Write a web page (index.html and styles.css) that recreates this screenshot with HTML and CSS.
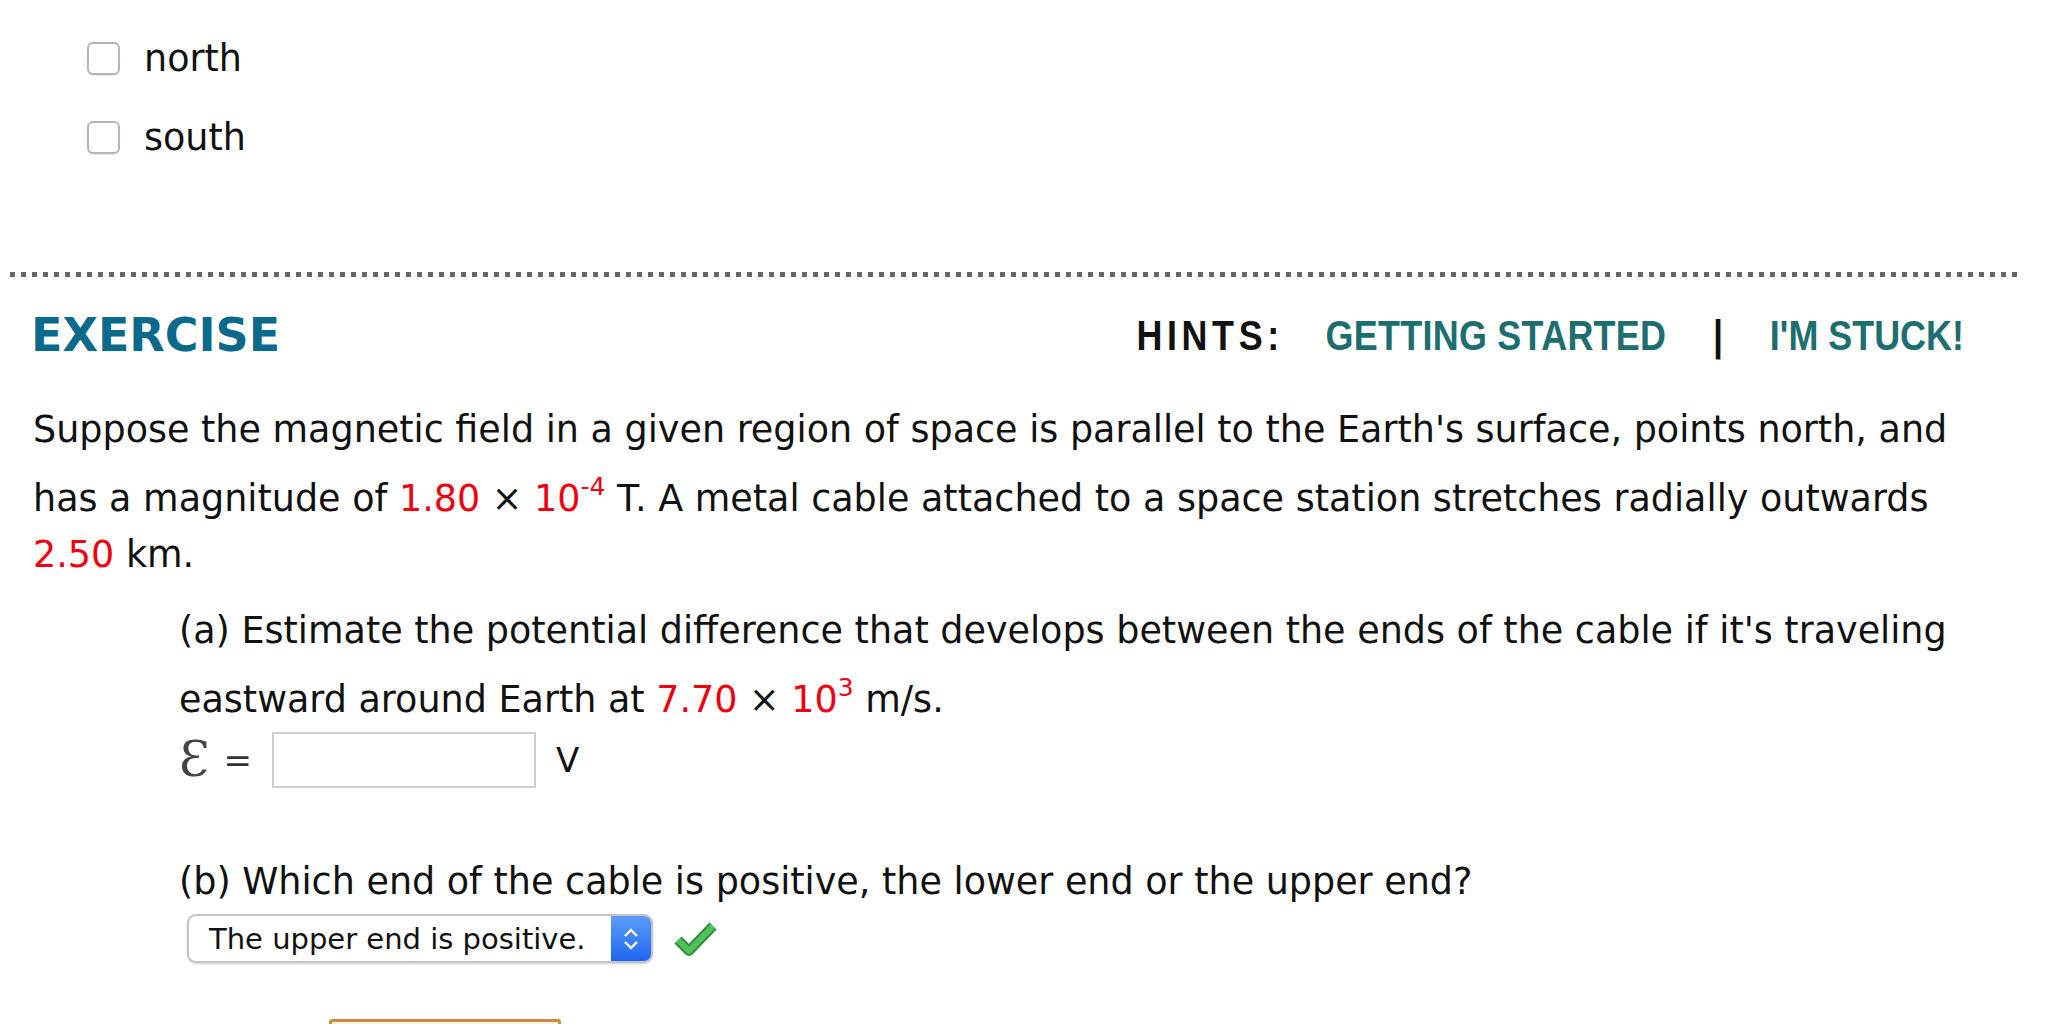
FILE: index.html
```html
<!DOCTYPE html>
<html lang="en">
<head>
    <meta charset="UTF-8">
    <meta name="viewport" content="width=device-width, initial-scale=1.0">
    <title>Exercise</title>
    <link rel="stylesheet" href="styles.css">
</head>
<body>

    <div class="choices">
        <label class="choice"><input type="checkbox" class="check"> north</label>
        <label class="choice"><input type="checkbox" class="check"> south</label>
    </div>

    <div class="divider"></div>

    <div class="exercise">
        <div class="exercise-head">
            <h2>EXERCISE</h2>
            <div class="hints">
                <span class="hints-label">HINTS:</span>
                <a href="#" class="hint-link">GETTING STARTED</a>
                <span class="hint-sep">|</span>
                <a href="#" class="hint-link">I'M STUCK!</a>
            </div>
        </div>

        <p class="prompt">Suppose the magnetic field in a given region of space is parallel to the Earth's surface, points north, and has a magnitude of <span class="num">1.80</span> &times; <span class="num">10<sup>-4</sup></span> T. A metal cable attached to a space station stretches radially outwards <span class="num">2.50</span> km.</p>

        <div class="part">
            <p class="part-text">(a) Estimate the potential difference that develops between the ends of the cable if it's traveling eastward around Earth at <span class="num">7.70</span> &times; <span class="num">10<sup>3</sup></span> m/s.</p>
            <div class="answer-row emf-row">
                <span class="emf">&#x190;</span>
                <span class="eq">=</span>
                <input type="text" class="answer">
                <span class="unit">V</span>
            </div>

            <p class="part-text part-b">(b) Which end of the cable is positive, the lower end or the upper end?</p>
            <div class="answer-row">
                <div class="select">
                    <span class="select-value">The upper end is positive.</span>
                    <span class="select-arrows">
                        <svg width="20" height="32" viewBox="0 0 20 32">
                            <polyline points="4,13 10,7 16,13" fill="none" stroke="#fff" stroke-width="2.4"/>
                            <polyline points="4,19 10,25 16,19" fill="none" stroke="#fff" stroke-width="2.4"/>
                        </svg>
                    </span>
                </div>
                <svg class="tick" width="46" height="38" viewBox="0 0 46 38">
                    <polyline points="5,20 16,31 40,6" fill="none" stroke="#2f8f3c" stroke-width="10" stroke-linejoin="round"/>
                    <polyline points="5,20 16,31 40,6" fill="none" stroke="#4fc25a" stroke-width="6" stroke-linejoin="round"/>
                </svg>
            </div>

            <button class="submit-btn"></button>
        </div>
    </div>

</body>
</html>
```

FILE: styles.css
```css
html, body {
    overflow: hidden;
}
body {
    margin: 0;
    padding: 0;
    background-color: #fff;
    color: #111;
    font-family: "DejaVu Sans", Verdana, sans-serif;
    font-size: 36.5px;
}
.choices {
    padding: 42px 0 0 87px;
}
.choice {
    display: flex;
    align-items: center;
    height: 33px;
    margin-bottom: 46px;
    gap: 24px;
    line-height: 30px;
}
.check {
    appearance: none;
    -webkit-appearance: none;
    width: 33px;
    height: 33px;
    margin: 0;
    border: 2px solid #b5b5b5;
    border-radius: 6px;
    background-color: #fff;
    box-shadow: 0 1px 1px rgba(0, 0, 0, 0.08);
}
.divider {
    height: 5px;
    margin: 118px 26px 0 10px;
    background-image: repeating-linear-gradient(to right, #666 0, #666 5px, transparent 5px, transparent 11px);
}
.exercise {
    padding: 0 82px 0 33px;
}
.exercise-head {
    display: flex;
    justify-content: space-between;
    align-items: center;
    margin-top: 30px;
    margin-left: -2px;
}
.exercise-head h2 {
    margin: 0;
    font-size: 46px;
    font-weight: bold;
    color: #0a6a8b;
    line-height: 56px;
}
/* narrow bold hint links, squeezed from the right edge */
.hints {
    display: flex;
    align-items: center;
    font-family: "Liberation Sans", Arial, sans-serif;
    font-weight: bold;
    font-size: 43px;
    transform: scaleX(0.835);
    transform-origin: right center;
}
.hints-label {
    color: #111;
    letter-spacing: 5.5px;
    margin-right: 50px;
}
.hint-link {
    color: #1c6e6f;
    text-decoration: none;
}
.hint-link:first-of-type {
    letter-spacing: 0.35px;
}
.hint-sep {
    color: #111;
    margin: 0 56px 0 56px;
}
.prompt {
    margin: 39px 0 0 0;
    line-height: 56px;
}
.num {
    color: #ee0010;
}
sup {
    display: inline-block;
    font-size: 25px;
    line-height: 25px;
    vertical-align: 16px;
    margin-top: 16px;
}
.part {
    padding-left: 146px;
}
.part-text {
    margin: 20px 0 0 0;
    line-height: 56px;
}
.answer-row {
    display: flex;
    align-items: center;
    gap: 14px;
}
.emf-row {
    margin-top: 4px;
}
.emf {
    font-family: "DejaVu Serif", "Liberation Serif", serif;
    color: #444;
    font-size: 49px;
    line-height: 50px;
}
.eq {
    font-size: 34px;
    color: #333;
    margin-right: 6px;
}
.answer {
    width: 264px;
    height: 56px;
    box-sizing: border-box;
    border: 2px solid #cfcfcf;
    margin: 0 6px 0 0;
    background-color: #fff;
}
.unit {
    font-size: 34px;
}
.part-b {
    margin-top: 66px;
}
.select {
    display: flex;
    align-items: stretch;
    width: 466px;
    height: 49px;
    margin: 4px 0 0 8px;
    box-sizing: border-box;
    border: 2px solid #c4c4c4;
    border-radius: 9px;
    box-shadow: 0 1px 2px rgba(0, 0, 0, 0.2);
    overflow: hidden;
    font-family: "DejaVu Sans", Verdana, sans-serif;
    font-size: 29px;
}
.select-value {
    flex: 1;
    display: flex;
    align-items: center;
    padding-left: 20px;
    color: #111;
}
.select-arrows {
    width: 40px;
    display: flex;
    align-items: center;
    justify-content: center;
    background: linear-gradient(#5c9df9, #1f66f0);
}
.tick {
    margin: 4px 0 0 6px;
}
.submit-btn {
    display: block;
    width: 232px;
    height: 60px;
    margin: 56px 0 0 150px;
    border: 3px solid #cf8a3d;
    border-radius: 3px;
    background-color: #fdf2e4;
}
```
